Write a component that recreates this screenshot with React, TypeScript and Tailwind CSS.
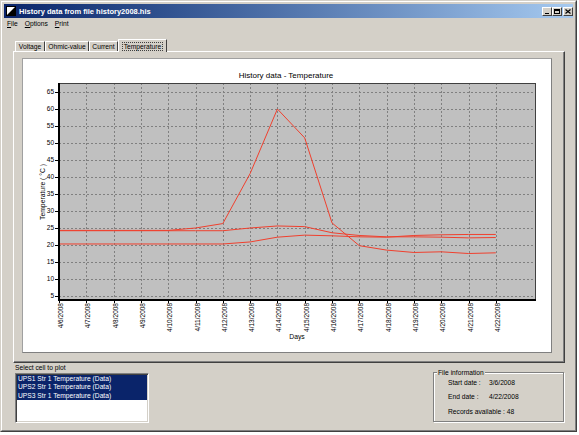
import React from "react";

const FONT = "font-['Liberation_Sans',Arial,sans-serif]";
const SVG_FONT = "Liberation Sans, Arial, sans-serif";

const dates = [
  "4/6/2008", "4/7/2008", "4/8/2008", "4/9/2008", "4/10/2008", "4/11/2008",
  "4/12/2008", "4/13/2008", "4/14/2008", "4/15/2008", "4/16/2008", "4/17/2008",
  "4/18/2008", "4/19/2008", "4/20/2008", "4/21/2008", "4/22/2008",
];

// temperature series read off the plot
const series = [
  [24.3, 24.3, 24.3, 24.3, 24.3, 25, 26.3, 41, 60, 51.5, 26.5, 19.8, 18.5, 17.8, 18, 17.5, 17.7],
  [24.2, 24.2, 24.2, 24.2, 24.2, 24.2, 24.2, 25, 25.6, 25.4, 23.6, 22.8, 22.4, 22.4, 22.3, 22.1, 22.2],
  [20.3, 20.3, 20.3, 20.3, 20.3, 20.3, 20.3, 20.9, 22.3, 22.9, 22.7, 22.4, 22.3, 22.8, 23, 23.1, 23.1],
];

const L = 36, R = 512, T = 24, B = 240;
const X = (i: number) => 36 + i * 27.3;
const Y = (v: number) => 33 + (65 - v) * 3.4;
const yTicks = [5, 10, 15, 20, 25, 30, 35, 40, 45, 50, 55, 60, 65];

function Chart() {
  return (
    <svg width="528" height="293" viewBox="0 0 528 293" className="block">
      <text x="263" y="19" fontSize="8" textAnchor="middle" fill="#000" fontFamily={SVG_FONT}>
        History data - Temperature
      </text>
      <rect x={L} y={T} width={R - L} height={B - T} fill="#c0c0c0" />
      {dates.map((_, i) =>
        i === 0 ? null : (
          <line key={"v" + i} x1={Math.round(X(i)) + 0.5} x2={Math.round(X(i)) + 0.5} y1={T} y2={B}
            stroke="#808080" strokeDasharray="2 2" strokeWidth="1" />
        )
      )}
      {yTicks.map((v) => (
        <line key={"h" + v} x1={L} x2={R} y1={Math.round(Y(v)) + 0.5} y2={Math.round(Y(v)) + 0.5}
          stroke="#808080" strokeDasharray="2 2" strokeWidth="1" />
      ))}
      <line x1={L} x2={R} y1={T + 0.5} y2={T + 0.5} stroke="#404040" />
      <line x1={R + 0.5} x2={R + 0.5} y1={T} y2={B} stroke="#404040" />
      {series.map((s, k) => (
        <polyline key={k} fill="none" stroke="#f0402e" strokeWidth="1"
          points={s.map((v, i) => `${X(i)},${Y(v)}`).join(" ")} />
      ))}
      <rect x="35" y={T} width="2" height={B - T + 2} fill="#000" />
      <rect x="35" y={B} width={R - 34} height="2" fill="#000" />
      {yTicks.map((v) => (
        <g key={"t" + v}>
          <line x1="32" x2="35" y1={Math.round(Y(v)) + 0.5} y2={Math.round(Y(v)) + 0.5} stroke="#000" />
          <text x="31" y={Y(v) + 2.3} fontSize="6.5" textAnchor="end" fill="#000" fontFamily={SVG_FONT}>
            {v}
          </text>
        </g>
      ))}
      {dates.map((d, i) => (
        <g key={d}>
          <line x1={Math.round(X(i)) + 0.5} x2={Math.round(X(i)) + 0.5} y1="242" y2="244" stroke="#000" />
          <text transform={`translate(${X(i) + 4} 244) rotate(-90)`} fontSize="6.5" textAnchor="end"
            fill="#000" fontFamily={SVG_FONT}>
            {d}
          </text>
        </g>
      ))}
      <text transform="translate(22 133) rotate(-90)" fontSize="6.8" textAnchor="middle" fill="#000"
        fontFamily={SVG_FONT}>
        Temperature ( °C )
      </text>
      <text x="274" y="280" fontSize="6.8" textAnchor="middle" fill="#000" fontFamily={SVG_FONT}>
        Days
      </text>
    </svg>
  );
}

function CapButton({ children, className = "" }: { children: React.ReactNode; className?: string }) {
  return (
    <div
      className={`w-[10px] h-[9px] bg-[#d4d0c8] border border-t-white border-l-white border-r-[#404040] border-b-[#404040] flex items-center justify-center ${className}`}
    >
      {children}
    </div>
  );
}

function Tab({ label, width, selected }: { label: string; width: string; selected?: boolean }) {
  if (selected) {
    return (
      <div
        className={`${width} h-[13px] -mb-[1px] relative z-10 bg-[#d4d0c8] border-t border-l border-r border-t-white border-l-white border-r-[#404040] flex items-start justify-center pt-[2px]`}
      >
        <span className="text-[6.7px] leading-[7px] px-[1px] border border-dotted border-[#404040]">{label}</span>
      </div>
    );
  }
  return (
    <div
      className={`${width} h-[10px] bg-[#d4d0c8] border-t border-l border-r border-t-white border-l-white border-r-[#404040] flex items-center justify-center text-[6.7px] leading-[8px]`}
    >
      {label}
    </div>
  );
}

export default function App() {
  const rows = [
    "UPS1 Str 1 Temperature (Data)",
    "UPS2 Str 1 Temperature (Data)",
    "UPS3 Str 1 Temperature (Data)",
  ];

  return (
    <div className={`w-[579px] h-[435px] bg-white ${FONT} text-black`}>
      <div className="w-[577px] h-[432px] border border-t-[#d4d0c8] border-l-[#d4d0c8] border-r-[#404040] border-b-[#404040]">
        <div className="w-full h-full border border-t-white border-l-white border-r-[#808080] border-b-[#808080] bg-[#d4d0c8] p-[2px] flex flex-col">
          {/* title bar */}
          <div className="h-[14px] shrink-0 flex items-center bg-linear-to-r from-[#0a246a] to-[#a6caf0]">
            <svg width="10" height="10" viewBox="0 0 10 10" className="ml-[2px]">
              <rect x="0.5" y="0.5" width="9" height="9" fill="#fff" stroke="#000" />
              <polygon points="1,9 9,1 9,9" fill="#000" />
            </svg>
            <span className="ml-[3px] text-white font-bold text-[7.5px] leading-[9px]">
              History data from file history2008.his
            </span>
            <div className="ml-auto flex items-center">
              <CapButton>
                <div className="w-[4px] h-[1px] bg-black mt-[4px]" />
              </CapButton>
              <CapButton>
                <div className="w-[6px] h-[5px] border border-black border-t-2" />
              </CapButton>
              <CapButton className="ml-[1px]">
                <svg width="6" height="5" viewBox="0 0 6 5">
                  <path d="M0.5 0.5 L5.5 4.5 M5.5 0.5 L0.5 4.5" stroke="#000" strokeWidth="1.2" />
                </svg>
              </CapButton>
            </div>
          </div>

          {/* menu bar */}
          <div className="h-[12px] shrink-0 flex items-center text-[6.7px] leading-[8px] pl-[3px]">
            <span><span className="underline">F</span>ile</span>
            <span className="ml-[7px]"><span className="underline">O</span>ptions</span>
            <span className="ml-[7px]"><span className="underline">P</span>rint</span>
          </div>

          {/* tabs */}
          <div className="mt-[9px] h-[12px] shrink-0 flex items-end pl-[11px]">
            <Tab label="Voltage" width="w-[30px]" />
            <Tab label="Ohmic-value" width="w-[44px]" />
            <Tab label="Current" width="w-[29px]" />
            <Tab label="Temperature" width="w-[49px]" selected />
          </div>

          {/* tab panel */}
          <div className="ml-[9px] w-[552px] h-[312px] shrink-0 border border-t-white border-l-white border-r-[#404040] border-b-[#404040] shadow-[inset_-1px_-1px_0_#808080] pt-[6px] pl-[8px]">
            <div className="w-[530px] h-[295px] border border-t-[#a0a0a0] border-l-[#a0a0a0] border-r-[#808080] border-b-[#808080] bg-white">
              <Chart />
            </div>
          </div>

          {/* bottom */}
          <div className="flex items-start">
            <div className="ml-[11px] flex flex-col">
              <div className="mt-[1px] text-[6.7px] leading-[8px]">Select cell to plot</div>
              <div className="mt-[1px] w-[134px] h-[50px] bg-white border border-t-[#808080] border-l-[#808080] border-r-white border-b-white shadow-[inset_1px_1px_0_#404040,inset_-1px_-1px_0_#d4d0c8] p-[1px]">
                {rows.map((r) => (
                  <div key={r} className="h-[8.33px] leading-[8.33px] text-[6.7px] text-white bg-[#0a246a] pl-[1px] whitespace-nowrap">
                    {r}
                  </div>
                ))}
              </div>
            </div>

            <div className="ml-auto mr-[9px] mt-[9px] w-[131px] h-[50px] relative border border-[#808080] shadow-[inset_1px_1px_0_#ffffff,1px_1px_0_#ffffff] pl-[14px] pt-[6px] text-[6.7px] leading-[8px]">
              <span className="absolute -top-[4px] left-[3px] px-[1px] bg-[#d4d0c8]">File information</span>
              <div className="flex">
                <span className="w-[41px]">Start date :</span>
                <span>3/6/2008</span>
              </div>
              <div className="flex mt-[6px]">
                <span className="w-[41px]">End date :</span>
                <span>4/22/2008</span>
              </div>
              <div className="mt-[7px]">Records available : 48</div>
            </div>
          </div>
        </div>
      </div>
    </div>
  );
}
